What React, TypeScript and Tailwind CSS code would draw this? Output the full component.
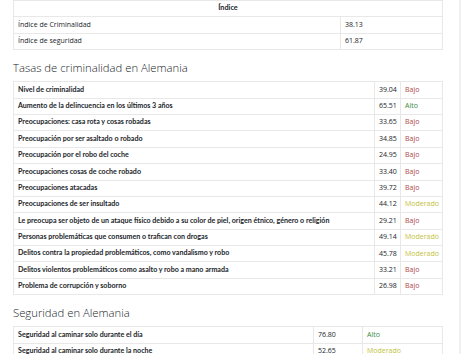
import React from "react";

type Row = { label: string; value: string; rating: string };

const crime: Row[] = [
  { label: "Nivel de criminalidad", value: "39.04", rating: "Bajo" },
  { label: "Aumento de la delincuencia en los últimos 3 años", value: "65.51", rating: "Alto" },
  { label: "Preocupaciones: casa rota y cosas robadas", value: "33.65", rating: "Bajo" },
  { label: "Preocupación por ser asaltado o robado", value: "34.85", rating: "Bajo" },
  { label: "Preocupación por el robo del coche", value: "24.95", rating: "Bajo" },
  { label: "Preocupaciones cosas de coche robado", value: "33.40", rating: "Bajo" },
  { label: "Preocupaciones atacadas", value: "39.72", rating: "Bajo" },
  { label: "Preocupaciones de ser insultado", value: "44.12", rating: "Moderado" },
  { label: "Le preocupa ser objeto de un ataque físico debido a su color de piel, origen étnico, género o religión", value: "29.21", rating: "Bajo" },
  { label: "Personas problemáticas que consumen o trafican con drogas", value: "49.14", rating: "Moderado" },
  { label: "Delitos contra la propiedad problemáticos, como vandalismo y robo", value: "45.78", rating: "Moderado" },
  { label: "Delitos violentos problemáticos como asalto y robo a mano armada", value: "33.21", rating: "Bajo" },
  { label: "Problema de corrupción y soborno", value: "26.98", rating: "Bajo" },
];

const safety: Row[] = [
  { label: "Seguridad al caminar solo durante el día", value: "76.80", rating: "Alto" },
  { label: "Seguridad al caminar solo durante la noche", value: "52.65", rating: "Moderado" },
];

function ratingClass(r: string) {
  if (r === "Alto") return "text-[#3d8b3d]";
  if (r === "Moderado") return "text-[#c2c23a]";
  return "text-[#b04848]";
}

const boldFont = { fontFamily: 'Lato, "Open Sans", sans-serif' };

function Heading({ children }: { children: React.ReactNode }) {
  return (
    <div className="pt-[11px] pb-[7px] text-[11.3px] leading-[13px] font-light text-[#212529]">
      {children}
    </div>
  );
}

function DataTable({ rows, valueW, ratingW }: { rows: Row[]; valueW: string; ratingW: string }) {
  return (
    <table className="w-[430px] border-collapse table-fixed text-[7px] text-[#212529]">
      <colgroup>
        <col />
        <col className={valueW} />
        <col className={ratingW} />
      </colgroup>
      <tbody>
        {rows.map((r) => (
          <tr key={r.label} className="h-[16.4px]">
            <td
              className="border border-[#e8e8e8] px-[4px] py-0 text-[7.1px] font-bold whitespace-nowrap"
              style={boldFont}
            >
              {r.label}
            </td>
            <td className="border border-[#e8e8e8] px-[4px] py-0">{r.value}</td>
            <td className={"border border-[#e8e8e8] px-[4px] py-0 " + ratingClass(r.rating)}>{r.rating}</td>
          </tr>
        ))}
      </tbody>
    </table>
  );
}

export default function App() {
  return (
    <div
      className="flex w-[462px] h-[354px] overflow-hidden bg-white"
      style={{ fontFamily: '"Open Sans", "Noto Sans", sans-serif' }}
    >
      <div className="w-[459px] shrink-0 pl-[13px]">
        <table className="w-[430px] border-collapse table-fixed text-[7px] text-[#212529]">
          <colgroup>
            <col />
            <col className="w-[102px]" />
          </colgroup>
          <tbody>
            <tr className="h-[16.4px]">
              <td
                colSpan={2}
                className="border border-[#e8e8e8] px-[4px] py-0 text-center text-[7.3px] font-bold"
                style={boldFont}
              >
                Índice
              </td>
            </tr>
            <tr className="h-[16.4px]">
              <td className="border border-[#e8e8e8] px-[4px] py-0">Índice de Criminalidad</td>
              <td className="border border-[#e8e8e8] px-[4px] py-0">38.13</td>
            </tr>
            <tr className="h-[16.4px]">
              <td className="border border-[#e8e8e8] px-[4px] py-0">Índice de seguridad</td>
              <td className="border border-[#e8e8e8] px-[4px] py-0">61.87</td>
            </tr>
          </tbody>
        </table>
        <Heading>Tasas de criminalidad en Alemania</Heading>
        <DataTable rows={crime} valueW="w-[26px]" ratingW="w-[42px]" />
        <Heading>Seguridad en Alemania</Heading>
        <DataTable rows={safety} valueW="w-[49px]" ratingW="w-[80px]" />
      </div>
      <div className="w-[2px] h-full bg-[#f0f0f0]" />
    </div>
  );
}
